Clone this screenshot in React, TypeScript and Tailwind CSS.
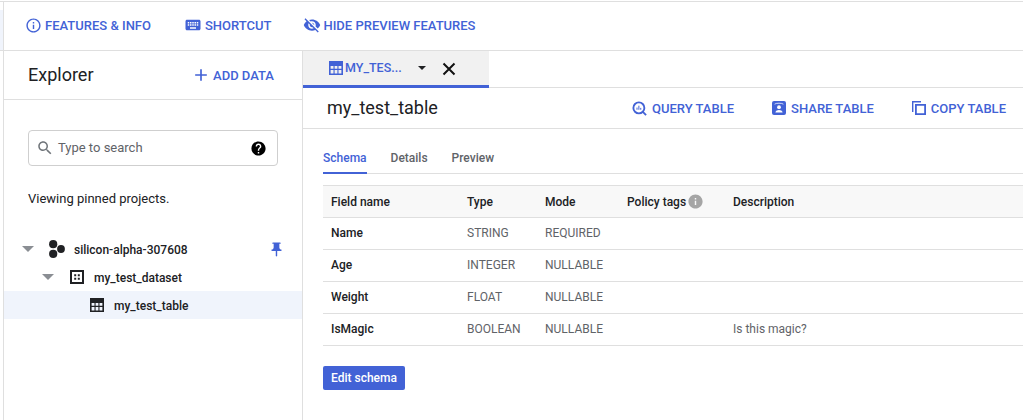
import type { ReactNode } from "react";

function Icon({ d, size = 16, className = "" }: { d: string; size?: number; className?: string }) {
  return (
    <svg width={size} height={size} viewBox="0 0 24 24" fill="currentColor" className={`shrink-0 ${className}`}>
      <path d={d} />
    </svg>
  );
}

const P = {
  info: "M11 7h2v2h-2zm0 4h2v6h-2zm1-9C6.48 2 2 6.48 2 12s4.48 10 10 10 10-4.48 10-10S17.52 2 12 2zm0 18c-4.41 0-8-3.59-8-8s3.59-8 8-8 8 3.59 8 8-3.59 8-8 8z",
  keyboard: "M20 5H4c-1.1 0-1.99.9-1.99 2L2 17c0 1.1.9 2 2 2h16c1.1 0 2-.9 2-2V7c0-1.1-.9-2-2-2zm-9 3h2v2h-2V8zm0 3h2v2h-2v-2zM8 8h2v2H8V8zm0 3h2v2H8v-2zm-1 2H5v-2h2v2zm0-3H5V8h2v2zm9 7H8v-2h8v2zm0-4h-2v-2h2v2zm0-3h-2V8h2v2zm3 3h-2v-2h2v2zm0-3h-2V8h2v2z",
  eyeOff: "M12 7c2.76 0 5 2.24 5 5 0 .65-.13 1.26-.36 1.83l2.92 2.92c1.51-1.26 2.7-2.89 3.43-4.75-1.73-4.39-6-7.5-11-7.5-1.4 0-2.74.25-3.98.7l2.16 2.16C10.74 7.13 11.35 7 12 7zM2 4.27l2.28 2.28.46.46C3.08 8.3 1.78 10.02 1 12c1.73 4.39 6 7.5 11 7.5 1.55 0 3.03-.3 4.38-.84l.42.42L19.73 22 21 20.73 3.27 3 2 4.27zM7.53 9.8l1.55 1.55c-.05.21-.08.43-.08.65 0 1.66 1.34 3 3 3 .22 0 .44-.03.65-.08l1.55 1.55c-.67.33-1.41.53-2.2.53-2.76 0-5-2.24-5-5 0-.79.2-1.53.53-2.2zm4.31-.78l3.15 3.15.02-.16c0-1.66-1.34-3-3-3l-.17.01z",
  add: "M19 13h-6v6h-2v-6H5v-2h6V5h2v6h6v2z",
  search: "M15.5 14h-.79l-.28-.27C15.41 12.59 16 11.11 16 9.5 16 5.91 13.09 3 9.5 3S3 5.91 3 9.5 5.91 16 9.5 16c1.61 0 3.09-.59 4.23-1.57l.27.28v.79l5 4.99L20.49 19l-4.99-5zm-6 0C7.01 14 5 11.99 5 9.5S7.01 5 9.5 5 14 7.01 14 9.5 11.99 14 9.5 14z",
  help: "M12 2C6.48 2 2 6.48 2 12s4.48 10 10 10 10-4.48 10-10S17.52 2 12 2zm1 17h-2v-2h2v2zm2.07-7.75l-.9.92C13.45 12.9 13 13.5 13 15h-2v-.5c0-1.1.45-2.1 1.17-2.83l1.24-1.26c.37-.36.59-.86.59-1.41 0-1.1-.9-2-2-2s-2 .9-2 2H8c0-2.21 1.79-4 4-4s4 1.79 4 4c0 .88-.36 1.68-.93 2.25z",
  pin: "M16 9V4h1c.55 0 1-.45 1-1s-.45-1-1-1H7c-.55 0-1 .45-1 1s.45 1 1 1h1v5c0 1.66-1.34 3-3 3v2h5.97v7l1 1 1-1v-7H19v-2c-1.66 0-3-1.34-3-3z",
  infoFill: "M12 2C6.48 2 2 6.48 2 12s4.48 10 10 10 10-4.48 10-10S17.52 2 12 2zm1 15h-2v-6h2v6zm0-8h-2V7h2v2z",
};

function TableIcon({ className = "" }: { className?: string }) {
  return (
    <svg width="14" height="14" viewBox="0 0 14 14" fill="currentColor" fillRule="evenodd" className={`shrink-0 ${className}`}>
      <path d="M0 0h14v14H0zM1.6 5v2.8h2.9V5zM5.6 5v2.8h2.8V5zM9.5 5v2.8h2.9V5zM1.6 9v3.4h2.9V9zM5.6 9v3.4h2.8V9zM9.5 9v3.4h2.9V9z" />
    </svg>
  );
}

function DatasetIcon({ className = "" }: { className?: string }) {
  return (
    <svg width="14" height="14" viewBox="0 0 14 14" fill="currentColor" fillRule="evenodd" className={`shrink-0 ${className}`}>
      <path d="M0 0h14v14H0zM2 2v10h10V2z" />
      <path d="M4.2 4.2h2v2h-2zM7.8 4.2h2v2h-2zM4.2 7.8h2v2h-2zM7.8 7.8h2v2h-2z" />
    </svg>
  );
}

function CopyIcon() {
  return (
    <svg width="14" height="14" viewBox="0 0 14 14" fill="currentColor" fillRule="evenodd" className="shrink-0">
      <path d="M0 0h9v1.4H1.4V11H0z" />
      <path d="M3 3h11v11H3zM4.8 4.8v7.4h7.4V4.8z" />
    </svg>
  );
}

function ShareIcon() {
  return (
    <svg width="14" height="14" viewBox="0 0 14 14" className="shrink-0">
      <rect width="14" height="14" rx="2" fill="currentColor" />
      <path d="M2.6 3.2C3.6 1.9 10.4 1.9 11.4 3.2" fill="none" stroke="#dfe5fa" strokeWidth="0.9" />
      <circle cx="7" cy="6.2" r="1.9" fill="#fff" />
      <path d="M3.4 11.6c0-2 2.2-2.7 3.6-2.7s3.6.7 3.6 2.7z" fill="#fff" />
    </svg>
  );
}

function QueryIcon() {
  return (
    <svg width="15" height="15" viewBox="0 0 24 24" fill="none" stroke="currentColor" className="shrink-0">
      <circle cx="11" cy="11" r="8.8" strokeWidth="3" />
      <path d="M17 17l5.5 5.5" strokeWidth="3" />
      <path d="M8 10.5v3.5M11 7.5v6.5M14 11v3" strokeWidth="1.6" />
    </svg>
  );
}

function ProjectIcon() {
  return (
    <svg width="16" height="18" viewBox="0 0 16 18" fill="#202124" className="shrink-0">
      <circle cx="4.2" cy="4.2" r="4.1" />
      <circle cx="4.2" cy="13.8" r="4.1" />
      <circle cx="12" cy="9" r="3.9" />
    </svg>
  );
}

function Caret() {
  return <span className="block w-0 h-0 border-x-[6px] border-x-transparent border-t-[6px] border-t-[#8a8e93]" />;
}

function HeadAction({ icon, label, gap }: { icon: ReactNode; label: string; gap: string }) {
  return (
    <button className={`flex items-center ${gap} text-[#4262d6] text-[13px] font-medium leading-none whitespace-nowrap`}>
      {icon}
      <span>{label}</span>
    </button>
  );
}

const rows = [
  ["Name", "STRING", "REQUIRED", ""],
  ["Age", "INTEGER", "NULLABLE", ""],
  ["Weight", "FLOAT", "NULLABLE", ""],
  ["IsMagic", "BOOLEAN", "NULLABLE", "Is this magic?"],
];

const cols = "grid grid-cols-[136px_78px_82px_106px_1fr] items-center pl-[8px]";

export default function App() {
  return (
    <div className="w-[1023px] h-[420px] overflow-hidden bg-white flex flex-col font-['Roboto',sans-serif] text-[#202124]">
      <div className="h-[2px] shrink-0 border-b border-[#dfdfdf]" />
      <header className="h-[49px] shrink-0 border-b border-[#dfdfdf] flex">
        <div className="w-[3px] mt-[8px] bg-[#f0f4fc]" />
        <div className="border-l border-[#dfdfdf] pl-[21px] pb-[2px] flex items-center flex-1">
          <HeadAction icon={<Icon d={P.info} size={17} />} label="FEATURES & INFO" gap="gap-[3px]" />
          <div className="w-[33px]" />
          <HeadAction icon={<Icon d={P.keyboard} size={18} />} label="SHORTCUT" gap="gap-[3px]" />
          <div className="w-[32px]" />
          <HeadAction icon={<Icon d={P.eyeOff} size={18} />} label="HIDE PREVIEW FEATURES" gap="gap-[2px]" />
        </div>
      </header>
      <main className="flex flex-1 min-h-0">
        <div className="w-[3px] shrink-0" />
        <aside className="w-[300px] shrink-0 border-x border-[#dfdfdf] flex flex-col">
          <div className="h-[49px] shrink-0 border-b border-[#dfdfdf] flex items-center justify-between pl-[24px] pr-[28px]">
            <span className="text-[18px] leading-none">Explorer</span>
            <button className="flex items-center gap-[2px] text-[#4262d6] text-[13px] font-medium leading-none">
              <Icon d={P.add} size={20} />
              ADD DATA
            </button>
          </div>
          <div className="px-[24px] pt-[30px]">
            <div className="h-[36px] w-[250px] border border-[#cfcfcf] rounded-[4px] flex items-center pl-[7px] pr-[10px]">
              <Icon d={P.search} size={18} className="text-[#70757a]" />
              <span className="ml-[4px] mb-[2px] text-[13px] text-[#5f6368] flex-1 leading-none">Type to search</span>
              <Icon d={P.help} size={17} className="text-black" />
            </div>
            <p className="mt-[25px] text-[13px] leading-[16px] text-[#202124]">Viewing pinned projects.</p>
          </div>
          <div className="mt-[28px] flex flex-col text-[12px] font-medium">
            <div className="h-[28px] flex items-center pl-[18px] pr-[17px]">
              <Caret />
              <span className="ml-[15px]"><ProjectIcon /></span>
              <span className="ml-[9px] pt-[2px] flex-1">silicon-alpha-307608</span>
              <Icon d={P.pin} size={17} className="text-[#4262d6]" />
            </div>
            <div className="h-[28px] flex items-center pl-[38px]">
              <Caret />
              <DatasetIcon className="ml-[16px]" />
              <span className="ml-[10px] pt-[2px]">my_test_dataset</span>
            </div>
            <div className="h-[28px] flex items-center pl-[86px] bg-[#f0f4fc]">
              <TableIcon />
              <span className="ml-[10px] pt-[2px]">my_test_table</span>
            </div>
          </div>
        </aside>
        <section className="flex-1 min-w-0 flex flex-col">
          <div className="h-[37px] shrink-0 border-b border-[#dfdfdf] flex">
            <div className="w-[186px] h-[37px] bg-[#f1f1f1] border-b-[3px] border-[#4262d6] flex items-center pl-[26px] text-[#4262d6]">
              <TableIcon />
              <span className="ml-[2px] text-[12.5px] font-medium leading-none">MY_TES...</span>
              <span className="ml-[16px] block w-0 h-0 border-x-[4px] border-x-transparent border-t-[4px] border-t-[#202124]" />
              <svg width="14" height="14" viewBox="0 0 14 14" stroke="#111" strokeWidth="2" className="ml-[16px] mt-[2px] shrink-0">
                <path d="M1.5 1.5l11 11M12.5 1.5l-11 11" />
              </svg>
            </div>
          </div>
          <div className="h-[41px] shrink-0 border-b border-[#dfdfdf] flex items-center justify-between pl-[24px] pr-[17px]">
            <h1 className="text-[18px] leading-none font-normal">my_test_table</h1>
            <div className="flex items-center gap-[38px]">
              <HeadAction icon={<QueryIcon />} label="QUERY TABLE" gap="gap-[5px]" />
              <HeadAction icon={<ShareIcon />} label="SHARE TABLE" gap="gap-[5px]" />
              <HeadAction icon={<CopyIcon />} label="COPY TABLE" gap="gap-[5px]" />
            </div>
          </div>
          <div className="pl-[20px] pt-[15px]">
            <div className="h-[30px] border-b border-[#dfdfdf] flex gap-[24px] text-[12px] font-medium text-[#5f6368]">
              <span className="h-[30px] pt-[7px] leading-[14px] text-[#4262d6] border-b-2 border-[#4262d6]">Schema</span>
              <span className="pt-[7px] leading-[14px]">Details</span>
              <span className="pt-[7px] leading-[14px]">Preview</span>
            </div>
            <div className="mt-[11px] text-[12px] leading-none">
              <div className={`${cols} h-[33px] bg-[#f8f8f8] border-y border-[#dfdfdf] font-medium`}>
                <span>Field name</span>
                <span>Type</span>
                <span>Mode</span>
                <span className="flex items-center gap-[1px]">Policy tags <Icon d={P.infoFill} size={17} className="text-[#a5a5a5]" /></span>
                <span>Description</span>
              </div>
              {rows.map((r) => (
                <div key={r[0]} className={`${cols} h-[32px] pb-[2px] border-b border-[#dfdfdf] text-[#5f6368]`}>
                  <span className="font-medium text-[#202124]">{r[0]}</span>
                  <span>{r[1]}</span>
                  <span>{r[2]}</span>
                  <span />
                  <span>{r[3]}</span>
                </div>
              ))}
            </div>
            <button className="mt-[20px] h-[24px] w-[82px] rounded-[2px] bg-[#4262d6] text-white text-[12px] font-medium leading-none">Edit schema</button>
          </div>
        </section>
      </main>
    </div>
  );
}
